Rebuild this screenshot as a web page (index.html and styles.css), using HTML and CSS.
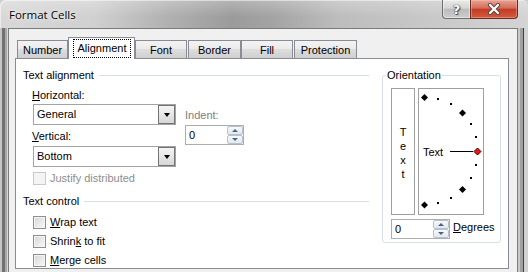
FILE: index.html
```html
<!DOCTYPE html>
<html>
<head>
<meta charset="utf-8">
<link rel="stylesheet" href="styles.css">
</head>
<body>
<div class="window">
  <div class="titlebar">
    <span class="title">Format Cells</span>
    <div class="caption-btns">
      <div class="cap help"><span>?</span></div>
      <div class="cap close">
        <svg width="16" height="12" viewBox="0 0 16 12">
          <path d="M4 2 L12 10 M12 2 L4 10" stroke="#5a4a48" stroke-width="4.2" stroke-linecap="round"/>
          <path d="M4 2 L12 10 M12 2 L4 10" stroke="#ffffff" stroke-width="2.2" stroke-linecap="round"/>
        </svg>
      </div>
    </div>
  </div>
  <div class="frame-body">
    <div class="frame-left"></div>
    <div class="client">
      <div class="tabs">
        <div class="tab t-number">Number</div>
        <div class="tab selected t-align"><span class="focus">Alignment</span></div>
        <div class="tab t-font">Font</div>
        <div class="tab t-border">Border</div>
        <div class="tab t-fill">Fill</div>
        <div class="tab t-prot">Protection</div>
      </div>
      <div class="panel">
        <div class="left-col">
          <div class="group-head"><span>Text alignment</span><i class="rule"></i></div>
          <div class="align-grid">
            <div class="align-main">
              <div class="lbl lbl-h"><u>H</u>orizontal:</div>
              <div class="combo">
                <span class="combo-val">General</span>
                <span class="combo-btn"><i class="arrow-down"></i></span>
              </div>
              <div class="lbl lbl-v"><u>V</u>ertical:</div>
              <div class="combo combo-v">
                <span class="combo-val">Bottom</span>
                <span class="combo-btn"><i class="arrow-down"></i></span>
              </div>
            </div>
            <div class="indent">
              <div class="lbl dim">Indent:</div>
              <div class="spin">
                <span class="spin-val">0</span>
                <span class="spin-btns">
                  <span class="spin-btn"><i class="tri-up"></i></span>
                  <span class="spin-btn"><i class="tri-down"></i></span>
                </span>
              </div>
            </div>
          </div>
          <div class="check disabled check-justify"><span class="box"></span><span>Justify distributed</span></div>
          <div class="group-head head-control"><span>Text control</span><i class="rule"></i></div>
          <div class="check check-wrap"><span class="box"></span><span><u>W</u>rap text</span></div>
          <div class="check check-next"><span class="box"></span><span>Shrin<u>k</u> to fit</span></div>
          <div class="check check-next"><span class="box"></span><span><u>M</u>erge cells</span></div>
        </div>
        <fieldset class="orient">
          <legend>Orientation</legend>
          <div class="orient-body">
            <div class="orient-top">
              <div class="vtext"><span>T</span><span>e</span><span>x</span><span>t</span></div>
              <div class="dial">
                <svg class="dial-svg" width="64" height="125" viewBox="0 0 64 125">
                  <g fill="#000" shape-rendering="crispEdges">
                    <rect x="18" y="9" width="2" height="2"/>
                    <rect x="31" y="14" width="2" height="2"/>
                    <rect x="51" y="34" width="2" height="2"/>
                    <rect x="56" y="47" width="2" height="2"/>
                    <rect x="56" y="75" width="2" height="2"/>
                    <rect x="51" y="88" width="2" height="2"/>
                    <rect x="31" y="108" width="2" height="2"/>
                    <rect x="18" y="113" width="2" height="2"/>
                    <rect x="31" y="62" width="23" height="1"/>
                  </g>
                  <g fill="#000">
                    <polygon points="5.5,5 9,8.5 5.5,12 2,8.5"/>
                    <polygon points="43.5,20.5 47,24 43.5,27.5 40,24"/>
                    <polygon points="43.5,97 47,100.5 43.5,104 40,100.5"/>
                    <polygon points="5.5,112.5 9,116 5.5,119.5 2,116"/>
                  </g>
                  <polygon points="58.5,59 62,62.5 58.5,66 55,62.5" fill="#ff1010" stroke="#3a0000" stroke-width="1"/>
                </svg>
                <span class="dial-text">Text</span>
              </div>
            </div>
            <div class="deg-row">
              <div class="spin">
                <span class="spin-val">0</span>
                <span class="spin-btns">
                  <span class="spin-btn"><i class="tri-up"></i></span>
                  <span class="spin-btn"><i class="tri-down"></i></span>
                </span>
              </div>
              <span class="deg-label"><u>D</u>egrees</span>
            </div>
          </div>
        </fieldset>
      </div>
    </div>
    <div class="frame-right"></div>
  </div>
</div>
</body>
</html>
```

FILE: styles.css
```css
* { box-sizing: border-box; }
html, body { margin: 0; padding: 0; }
body {
  width: 528px;
  height: 272px;
  overflow: hidden;
  font-family: "Liberation Sans", Arial, sans-serif;
  font-size: 11px;
  color: #000;
  background: #cfcfcf;
}
.window {
  width: 528px;
  height: 272px;
  display: flex;
  flex-direction: column;
  background: linear-gradient(to right, #d8d8d8 0%, #d0d0d0 18%, #b0b0b0 32%, #9b9b9b 44%, #a4a4a4 52%, #bdbdbd 64%, #c6c6c6 78%, #d4d4d4 100%);
  border-radius: 6px 6px 0 0;
}
.titlebar {
  height: 28px;
  flex: none;
  display: flex;
  align-items: flex-start;
  background: linear-gradient(rgba(255,255,255,0.25), rgba(255,255,255,0) 60%);
  border-radius: 6px 6px 0 0;
  box-shadow: inset 1px 1px 0 rgba(255,255,255,0.5);
}
.title {
  font-family: "Open Sans", "Liberation Sans", sans-serif;
  font-size: 11.5px;
  line-height: 16px;
  margin: 7px 0 0 9px;
  color: #000;
  text-shadow: 0 0 5px rgba(255,255,255,0.9), 0 0 2px rgba(255,255,255,0.8);
}
.caption-btns {
  margin-left: auto;
  margin-right: 10px;
  display: flex;
}
.cap {
  height: 19px;
  display: flex;
  align-items: center;
  justify-content: center;
}
.help {
  width: 28px;
  border: 1px solid #6e6e6e;
  border-top: none;
  border-right: none;
  border-radius: 0 0 0 4px;
  background: linear-gradient(#eaeaea, #d6d6d6 45%, #bcbcbc 52%, #cdcdcd);
  box-shadow: inset 0 0 0 1px rgba(255,255,255,0.45);
}
.help span {
  font-family: "DejaVu Sans", sans-serif;
  font-weight: bold;
  font-size: 13px;
  color: #fff;
  line-height: 1;
  text-shadow: 0 0 1px #333, 0 0 1px #333, 1px 1px 1px #555;
}
.close {
  width: 48px;
  border: 1px solid #6b2a20;
  border-top: none;
  border-radius: 0 0 4px 0;
  background: linear-gradient(#e6a595, #d66b57 45%, #c23d24 52%, #d55a40);
  box-shadow: inset 0 0 0 1px rgba(255,200,190,0.4);
}
.frame-body {
  flex: 1;
  display: flex;
}
.frame-left {
  width: 8px;
  background: linear-gradient(to right, #c6c6c6 0 2px, #727272 2px 5px, #a8a8a8 5px 7px, #d8d8d8 7px);
}
.client {
  width: 510px;
  border: 1px solid #7b7b7b;
  border-bottom: none;
  background: #f0f0f0;
  padding-top: 8px;
  display: flex;
  flex-direction: column;
}
.frame-right {
  flex: 1;
  background: linear-gradient(to right, #c8c8c8 0 2px, #a2a2a2 2px 5px, #3e3e3e 5px 6px, #d2d2d2 6px);
}

/* tabs */
.tabs {
  height: 21px;
  display: flex;
  align-items: flex-end;
  padding-left: 8px;
  flex: none;
}
.tab {
  height: 18px;
  border: 1px solid #898c95;
  border-bottom: none;
  background: linear-gradient(#f3f3f3, #ebebeb 45%, #dddddd 50%, #cfcfcf);
  display: flex;
  align-items: center;
  justify-content: center;
  line-height: 13px;
  padding-top: 1px;
}
.t-number { width: 51px; }
.t-align { width: 67px; }
.t-font { width: 52px; }
.t-border { width: 53px; margin-left: 1px; }
.t-fill { width: 52px; }
.t-prot { width: 63px; margin-left: 1px; }
.tab.selected {
  height: 22px;
  margin-bottom: -1px;
  background: #fff;
  position: relative;
  z-index: 1;
  align-items: flex-start;
  padding: 1px 3px 0 4px;
}
.focus {
  flex: 1;
  height: 19px;
  border: 1px dotted #000;
  line-height: 16px;
  text-align: center;
}

/* panel */
.panel {
  margin-left: 6px;
  width: 494px;
  height: 211px;
  border: 1px solid #898c95;
  background: #fff;
  display: flex;
  align-items: flex-start;
  padding-top: 10px;
}
.left-col {
  width: 353px;
  padding-left: 7px;
  flex: none;
}
.group-head {
  display: flex;
  align-items: center;
  height: 13px;
  line-height: 13px;
}
.rule {
  flex: 1;
  height: 1px;
  background: #d5dfe5;
  margin-left: 5px;
}
.align-grid {
  display: flex;
  margin-top: 7px;
}
.align-main {
  margin-left: 9px;
  width: 144px;
}
.lbl {
  line-height: 13px;
  height: 13px;
}
.dim { color: #7d7d7d; }
.combo {
  margin: 2px 0 0 1px;
  width: 143px;
  height: 21px;
  border: 1px solid #a3a3a3;
  background: #fff;
  display: flex;
}
.lbl-v { margin-top: 5px; }
.combo-v { margin-top: 3px; }
.combo-val {
  flex: 1;
  padding-left: 3px;
  line-height: 19px;
}
.combo-btn {
  width: 17px;
  border: 1px solid #737373;
  background: linear-gradient(#f4f4f4, #e6e6e6 50%, #d6d6d6);
  display: flex;
  align-items: center;
  justify-content: center;
}
.arrow-down {
  width: 0;
  height: 0;
  border-left: 3.5px solid transparent;
  border-right: 3.5px solid transparent;
  border-top: 4px solid #000;
}
.indent {
  margin-left: 9px;
  padding-top: 20px;
}
.spin {
  margin-top: 3px;
  width: 59px;
  height: 20px;
  border: 1px solid #abadb3;
  background: #fff;
  display: flex;
}
.spin-val {
  flex: 1;
  padding-left: 3px;
  line-height: 18px;
}
.spin-btns {
  width: 16px;
  display: flex;
  flex-direction: column;
}
.spin-btn {
  flex: 1;
  border: 1px solid #b9c1cc;
  border-radius: 2px;
  background: linear-gradient(#f7f9fb, #e3e8ee);
  display: flex;
  align-items: center;
  justify-content: center;
}
.tri-up, .tri-down {
  width: 0;
  height: 0;
  border-left: 3px solid transparent;
  border-right: 3px solid transparent;
}
.tri-up { border-bottom: 3px solid #4d6182; }
.tri-down { border-top: 3px solid #4d6182; }

.check {
  display: flex;
  align-items: center;
  height: 13px;
  line-height: 13px;
  margin-left: 10px;
}
.box {
  width: 13px;
  height: 13px;
  border: 1px solid #8e8f8f;
  background: linear-gradient(135deg, #d6d6d6, #f9f9f9);
  box-shadow: inset 0 0 0 1px #f4f4f4;
  margin-right: 4px;
  flex: none;
}
.check.disabled { color: #8d8d8d; }
.check.disabled .box {
  border-color: #c9c9c9;
  background: #f4f4f4;
  box-shadow: none;
}
.check-justify { margin-top: 5px; }
.head-control { margin-top: 10px; }
.check-wrap { margin-top: 8px; }
.check-next { margin-top: 6px; }

/* orientation */
.orient {
  margin: 0 0 0 13px;
  width: 119px;
  border: 1px solid #d5dfe5;
  border-radius: 3px;
  padding: 6px 0 3px 3px;
  min-width: 0;
}
.orient legend {
  padding: 0 1px;
  line-height: 13px;
  font-size: 11px;
}
.orient-body {
  margin-left: 5px;
}
.orient-top {
  display: flex;
  height: 127px;
}
.vtext {
  width: 24px;
  border: 1px solid #a0a0a0;
  display: flex;
  flex-direction: column;
  align-items: center;
  justify-content: center;
  line-height: 14px;
  padding-top: 3px;
}
.dial {
  margin-left: 3px;
  width: 66px;
  border: 1px solid #a0a0a0;
  position: relative;
}
.dial-svg {
  display: block;
}
.dial-text {
  position: absolute;
  left: 4px;
  top: 57px;
  line-height: 13px;
}
.deg-row {
  display: flex;
  align-items: center;
  margin-top: 1px;
}
.deg-label {
  margin-left: 3px;
  line-height: 13px;
}
```
